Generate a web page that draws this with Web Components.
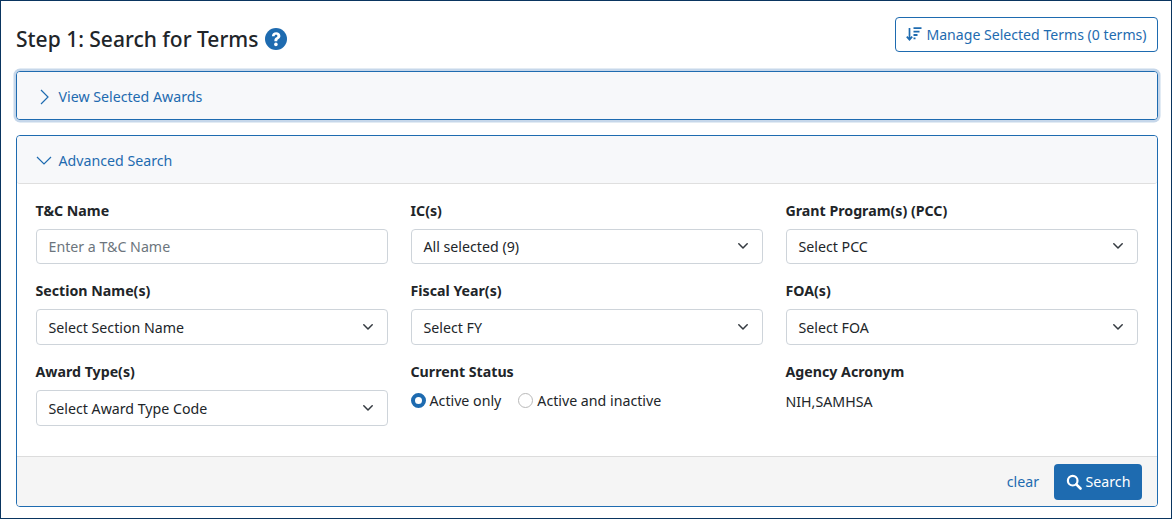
<!DOCTYPE html>
<html><head><meta charset="utf-8">
<style>
html,body{margin:0;padding:0;background:#fff}
body{font-family:"Noto Sans","Open Sans",sans-serif;color:#212529}
</style></head><body>
<search-page>
<page-header slot="header" title-text="Step 1: Search for Terms" action="Manage Selected Terms (0 terms)"></page-header>
<collapse-panel label="View Selected Awards" focused></collapse-panel>
<collapse-panel label="Advanced Search" open>
  <form-grid>
    <form-field label="T&amp;C Name"><text-input placeholder="Enter a T&amp;C Name"></text-input></form-field>
    <form-field label="IC(s)"><select-box value="All selected (9)" h="35"></select-box></form-field>
    <form-field label="Grant Program(s) (PCC)"><select-box value="Select PCC" h="35"></select-box></form-field>
    <form-field label="Section Name(s)"><select-box value="Select Section Name"></select-box></form-field>
    <form-field label="Fiscal Year(s)"><select-box value="Select FY"></select-box></form-field>
    <form-field label="FOA(s)"><select-box value="Select FOA"></select-box></form-field>
    <form-field label="Award Type(s)"><select-box value="Select Award Type Code"></select-box></form-field>
    <form-field label="Current Status"><radio-group></radio-group></form-field>
    <form-field label="Agency Acronym"><plain-value>NIH,SAMHSA</plain-value></form-field>
  </form-grid>
  <panel-footer slot="footer"></panel-footer>
</collapse-panel>
</search-page>
<script>
function def(name, html){
  customElements.define(name, class extends HTMLElement{
    connectedCallback(){
      if(this.shadowRoot) return;
      const r=this.attachShadow({mode:'open'});
      r.innerHTML=typeof html==='function'?html(this):html;
    }
  });
}
const esc=s=>String(s||'').replace(/&/g,'&amp;').replace(/</g,'&lt;');
const chevron='<svg width="10" height="6" viewBox="0 0 10 6"><path d="M.8.8L5 5l4.2-4.2" fill="none" stroke="#343a40" stroke-width="1.5" stroke-linecap="round" stroke-linejoin="round"/></svg>';

def('search-page',`<style>
:host{display:block;box-sizing:border-box;width:1172px;height:519px;border:1.5px solid #0a3560;padding:15px 13px 10px 14.5px;overflow:hidden}
.col{display:flex;flex-direction:column;gap:15px}
</style><slot name="header"></slot><div class="col"><slot></slot></div>`);

def('page-header',h=>`<style>
:host{display:flex;justify-content:space-between;align-items:center;height:36px;margin-bottom:19px}
h1{margin:0 0 0 .5px;font:500 21px/36px "Noto Sans","Open Sans",sans-serif;color:#212529;display:flex;align-items:center;gap:7px;padding-top:10px}
button{box-sizing:border-box;width:263px;height:35px;border:1px solid #1e6bb0;border-radius:4px;background:#fff;color:#1e6bb0;font:14.1px "Noto Sans","Open Sans",sans-serif;display:flex;align-items:center;justify-content:center;gap:4px;padding:0}
</style>
<h1>${esc(h.getAttribute('title-text'))}<svg width="22" height="22" viewBox="0 0 22 22"><circle cx="11" cy="11" r="11" fill="#1e6bb0"/><path d="M6.900 8.200c.1-2.400 1.800-3.900 4.300-3.900 2.400 0 4.200 1.500 4.200 3.600 0 1.500-.8 2.300-1.900 3-.9.600-1.200 1-1.200 1.700v.6H9.400v-.8c0-1.400.6-2.200 1.600-2.900.9-.6 1.400-1 1.400-1.600 0-.7-.5-1.100-1.300-1.100-.9 0-1.400.5-1.500 1.400z" fill="#fff"/><circle cx="10.900" cy="16.400" r="1.800" fill="#fff"/></svg></h1>
<button><svg width="16" height="15" viewBox="0 0 16 15"><path d="M3.500 1v11M.8 9.600l2.700 3.200 2.700-3.200" fill="none" stroke="#1e6bb0" stroke-width="1.700"/><path d="M7.500 1.200h8M7.500 4.600h6M7.500 8h4M7.500 11.400h2" stroke="#1e6bb0" stroke-width="1.800"/></svg>${esc(h.getAttribute('action'))}</button>`);

def('collapse-panel',h=>{
 const open=h.hasAttribute('open'),f=h.hasAttribute('focused');
 return `<style>
:host{box-sizing:border-box;border:1px solid #1e6bb0;border-radius:4px;background:#fff;${f?'box-shadow:0 0 0 2.5px #c6d7ea;height:49px;overflow:visible;':'height:372px;overflow:hidden;'}display:flex;flex-direction:column}
.head{box-sizing:border-box;height:${open?48:47}px;padding-top:${open?1:2}px;background:#f7f8fa;display:flex;align-items:center;padding-left:${open?19:23}px;gap:${open?7:10}px;color:#1e6bb0;font-size:14.2px;${open?'border-bottom:1px solid #dfdfdf;':''}border-radius:3px}
.body{flex:1;display:flex;flex-direction:column}
.main{flex:1}
</style><div class="head">${open?'<svg width="16" height="9" viewBox="0 0 16 9"><path d="M1 1l7 7 7-7" fill="none" stroke="#1e6bb0" stroke-width="1.200"/></svg>':'<svg width="9" height="16" viewBox="0 0 9 16"><path d="M1 1l7 7-7 7" fill="none" stroke="#1e6bb0" stroke-width="1.200"/></svg>'}<span>${esc(h.getAttribute('label'))}</span></div>
${open?'<div class="body"><div class="main"><slot></slot></div><slot name="footer"></slot></div>':''}`});

def('form-grid',`<style>
:host{display:grid;grid-template-columns:repeat(3,352px);column-gap:23px;grid-template-rows:80px 81px 85px;padding:17px 19px 0;box-sizing:border-box}
</style><slot></slot>`);

def('form-field',h=>`<style>
:host{display:block}
label{display:block;font:700 14.2px/20px "Noto Sans","Open Sans",sans-serif;color:#212529;margin-bottom:8px}
</style><label>${esc(h.getAttribute('label'))}</label><slot></slot>`);

def('text-input',h=>`<style>
:host{display:flex;box-sizing:border-box;height:35px;border:1px solid #ced4da;border-radius:4px;align-items:center;padding:0 12px;color:#6c757d;font-size:14.2px;background:#fff}
</style><span>${esc(h.getAttribute('placeholder'))}</span>`);

def('select-box',h=>`<style>
:host{display:flex;box-sizing:border-box;height:${h.getAttribute('h')||36}px;border:1px solid #ced4da;border-radius:4px;align-items:center;justify-content:space-between;padding:0 14px 0 12px;color:#212529;font-size:14.2px;background:#fff}
svg{display:block;margin-top:-1px}
</style><span>${esc(h.getAttribute('value'))}</span>${chevron}`);

def('radio-group',`<style>
:host{display:flex;align-items:center;gap:17px;font-size:14.2px;height:20px;margin-top:0;color:#212529}
span.o{display:flex;align-items:center;gap:4px}
i{display:block;box-sizing:border-box;width:15px;height:15px;border-radius:50%}
.on{border:4.500px solid #1e6bb0;background:#fff}
.off{border:1px solid #b9b9b9;background:#fff}
</style><span class="o"><i class="on"></i>Active only</span><span class="o"><i class="off"></i>Active and inactive</span>`);

def('plain-value',`<style>:host{display:block;font-size:14.2px;line-height:20px;margin-top:10px;color:#212529}</style><slot></slot>`);

def('panel-footer',`<style>
:host{display:flex;box-sizing:border-box;height:50px;background:#f5f5f5;border-top:1px solid #dcdcdc;align-items:center;justify-content:flex-end;padding:0 15px 0 0;gap:15px}
a{color:#1e6bb0;font-size:14.2px}
button{box-sizing:border-box;width:88px;height:36px;background:#1e6bb0;border:0;border-radius:4px;color:#fff;font:14.2px "Noto Sans","Open Sans",sans-serif;display:flex;align-items:center;justify-content:center;gap:4px;padding:0}
</style><a>clear</a><button><svg width="16" height="16" viewBox="0 0 16 16"><circle cx="6.700" cy="6.700" r="4.800" fill="none" stroke="#fff" stroke-width="2.200"/><path d="M10.300 10.300l4.200 4.200" stroke="#fff" stroke-width="2.600" stroke-linecap="round"/></svg>Search</button>`);
</script>
</body></html>
